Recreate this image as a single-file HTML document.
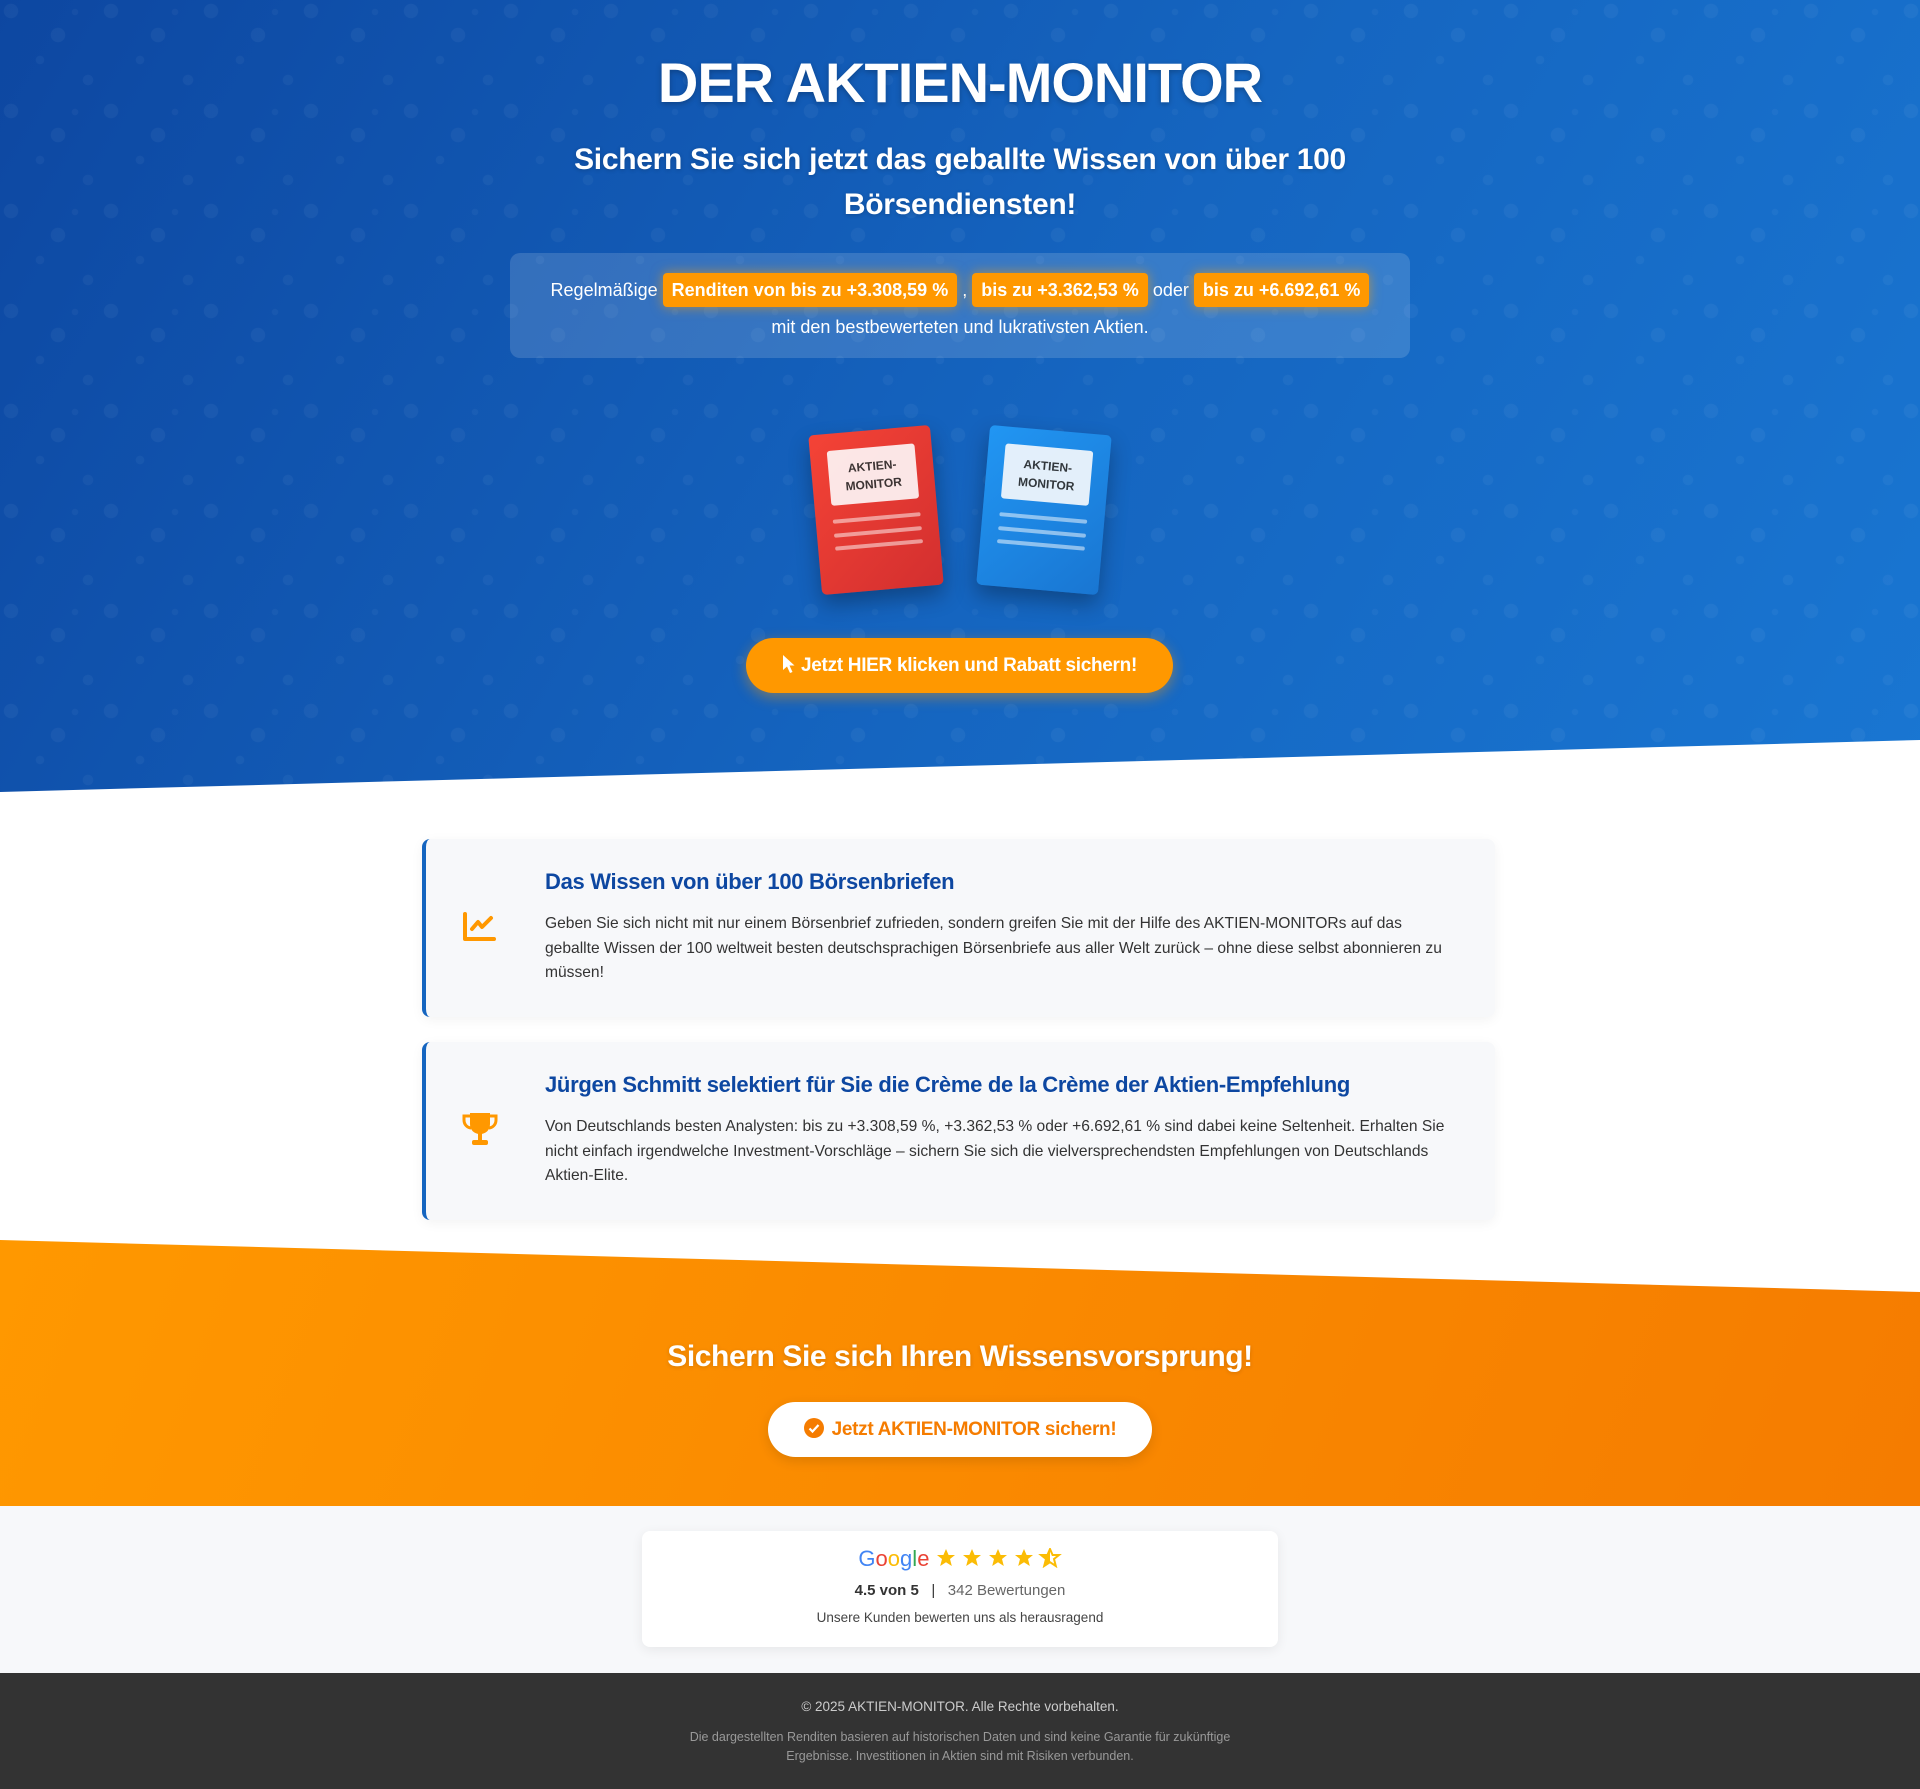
<!DOCTYPE html>
<html><head><meta charset="utf-8"><style>
*{margin:0;padding:0;box-sizing:border-box}
body{width:1920px;height:1789px;font-family:"Liberation Sans",Arial,sans-serif;background:#fff;position:relative;overflow:hidden}
.hero{position:absolute;left:0;top:0;width:1920px;height:792px;
background:
radial-gradient(circle at 11px 11px,rgba(255,255,255,.045) 7px,transparent 7.5px),
radial-gradient(circle at 58px 35px,rgba(255,255,255,.045) 7px,transparent 7.5px),
radial-gradient(circle at 40px 60px,rgba(255,255,255,.04) 4px,transparent 4.5px),
radial-gradient(circle at 88px 80px,rgba(255,255,255,.04) 5px,transparent 5.5px),
radial-gradient(circle at 75px 12px,rgba(255,255,255,.035) 3px,transparent 3.5px),
linear-gradient(120deg,#0d47a1 0%,#1565c0 55%,#1976d2 100%);
background-size:100px 100px,100px 100px,100px 100px,100px 100px,100px 100px,100% 100%;
clip-path:polygon(0 0,100% 0,100% 740px,0 792px)}
.c{position:absolute;left:0;width:1920px;text-align:center;color:#fff}
h1{font-size:56px;font-weight:bold;text-shadow:0 2px 6px rgba(0,0,0,.25);letter-spacing:-1px}
.sub{top:137px;font-size:30px;font-weight:bold;line-height:45px;text-shadow:0 1px 4px rgba(0,0,0,.2);letter-spacing:-.3px}
.box{position:absolute;left:510px;top:253px;width:900px;height:105px;background:rgba(255,255,255,.15);border-radius:10px;color:#fff;font-size:18px;text-align:center;padding-top:19px;line-height:37px}
.hl{background:#ff9800;font-weight:bold;padding:7px 9px;border-radius:4px;box-shadow:0 0 12px rgba(255,160,0,.6)}
.book{position:absolute;width:122px;height:160px;border-radius:5px;box-shadow:0 10px 22px rgba(0,0,0,.3)}
.book .lab{position:absolute;left:17px;top:17px;width:88px;height:55px;background:#fff;border-radius:3px;color:#333;font-size:12px;font-weight:bold;line-height:18px;text-align:center;padding-top:10px;opacity:.95}
.book .ln{position:absolute;left:17px;width:88px;height:4px;border-radius:2px;background:rgba(255,255,255,.5)}
.btn1{position:absolute;left:746px;top:638px;width:427px;height:55px;border-radius:28px;background:#ff9800;color:#fff;font-size:19px;font-weight:bold;text-align:center;line-height:55px;box-shadow:0 4px 14px rgba(255,152,0,.45);letter-spacing:-.3px}
.card{position:absolute;left:422px;width:1073px;background:#f7f8fa;border-left:4px solid #1565c0;border-radius:8px;box-shadow:0 3px 12px rgba(0,0,0,.05)}
.card h3{position:absolute;left:119px;top:30px;color:#0d47a1;font-size:22px;font-weight:bold;letter-spacing:-.3px}
.card p{position:absolute;left:119px;top:73px;width:907px;color:#333;font-size:15.6px;line-height:24.5px}
.card svg{position:absolute;left:36px}
.orange{position:absolute;left:0;top:1240px;width:1920px;height:266px;background:linear-gradient(110deg,#ff9800 0%,#f57c00 100%);clip-path:polygon(0 0,100% 52px,100% 100%,0 100%)}
.btn2{position:absolute;left:768px;top:1402px;width:384px;height:55px;border-radius:28px;background:#fff;color:#f57c00;font-size:19px;font-weight:bold;text-align:center;line-height:55px;box-shadow:0 4px 12px rgba(0,0,0,.12);letter-spacing:-.3px}
.rev{position:absolute;left:0;top:1506px;width:1920px;height:167px;background:#f7f8fa}
.rcard{position:absolute;left:642px;top:25px;width:636px;height:116px;background:#fff;border-radius:8px;box-shadow:0 3px 12px rgba(0,0,0,.07);text-align:center}
footer{position:absolute;left:0;top:1673px;width:1920px;height:116px;background:#333;text-align:center}
</style></head><body>
<div class="hero"></div>
<div class="c" style="top:50px"><h1>DER AKTIEN-MONITOR</h1></div>
<div class="c sub">Sichern Sie sich jetzt das geballte Wissen von über 100<br>Börsendiensten!</div>
<div class="box">Regelmäßige <span class="hl">Renditen von bis zu +3.308,59 %</span> , <span class="hl">bis zu +3.362,53 %</span> oder <span class="hl">bis zu +6.692,61 %</span><br>mit den bestbewerteten und lukrativsten Aktien.</div>
<div class="book" style="left:815px;top:430px;background:linear-gradient(135deg,#f44336,#d32f2f);transform:rotate(-5deg)"><div class="lab" style="background:#fdf0f0">AKTIEN-<br>MONITOR</div><div class="ln" style="top:86px"></div><div class="ln" style="top:100px"></div><div class="ln" style="top:113px"></div></div>
<div class="book" style="left:983px;top:430px;background:linear-gradient(135deg,#2196f3,#1976d2);transform:rotate(5deg)"><div class="lab" style="background:#eef5fc">AKTIEN-<br>MONITOR</div><div class="ln" style="top:86px"></div><div class="ln" style="top:100px"></div><div class="ln" style="top:113px"></div></div>
<div class="btn1"><svg width="13" height="20" viewBox="0 0 13 20" style="vertical-align:-3px;margin-right:6px"><path d="M1 1V16L5 12.5L8 19L10.5 18L7.5 11.5H12.5Z" fill="#fff"/></svg>Jetzt HIER klicken und Rabatt sichern!</div>

<div class="card" style="top:839px;height:178px">
<svg style="top:73px" width="34" height="30" viewBox="0 0 34 30"><path d="M3 2V27H32" fill="none" stroke="#ff9800" stroke-width="4" stroke-linecap="round" stroke-linejoin="round"/><path d="M10 17L16 10L20 15L29 6" fill="none" stroke="#ff9800" stroke-width="4" stroke-linecap="round" stroke-linejoin="round"/></svg>
<h3>Das Wissen von über 100 Börsenbriefen</h3>
<p>Geben Sie sich nicht mit nur einem Börsenbrief zufrieden, sondern greifen Sie mit der Hilfe des AKTIEN-MONITORs auf das geballte Wissen der 100 weltweit besten deutschsprachigen Börsenbriefe aus aller Welt zurück – ohne diese selbst abonnieren zu müssen!</p></div>
<div class="card" style="top:1042px;height:178px">
<svg style="top:70px" width="36" height="34" viewBox="0 0 36 34"><path d="M8 1H28V12C28 18 24 22 18 22C12 22 8 18 8 12Z" fill="#ff9800"/><path d="M8 4H2V8C2 13 6 16 9 16M28 4H34V8C34 13 30 16 27 16" fill="none" stroke="#ff9800" stroke-width="3"/><rect x="16" y="21" width="4" height="7" fill="#ff9800"/><rect x="10" y="28" width="16" height="5" rx="2" fill="#ff9800"/></svg>
<h3>Jürgen Schmitt selektiert für Sie die Crème de la Crème der Aktien-Empfehlung</h3>
<p>Von Deutschlands besten Analysten: bis zu +3.308,59 %, +3.362,53 % oder +6.692,61 % sind dabei keine Seltenheit. Erhalten Sie nicht einfach irgendwelche Investment-Vorschläge – sichern Sie sich die vielversprechendsten Empfehlungen von Deutschlands Aktien-Elite.</p></div>

<div class="orange"></div>
<div class="c" style="top:1340px;font-size:30px;font-weight:bold;text-shadow:0 1px 4px rgba(0,0,0,.15);letter-spacing:-.4px">Sichern Sie sich Ihren Wissensvorsprung!</div>
<div class="btn2"><svg width="20" height="20" viewBox="0 0 20 20" style="vertical-align:-3px;margin-right:8px"><circle cx="10" cy="10" r="10" fill="#f57c00"/><path d="M5.5 10.5L8.5 13.5L14.5 7" fill="none" stroke="#fff" stroke-width="2.2"/></svg>Jetzt AKTIEN-MONITOR sichern!</div>

<div class="rev"><div class="rcard">
<div style="margin-top:13px;font-size:22px;line-height:30px"><span style="color:#4285f4">G</span><span style="color:#ea4335">o</span><span style="color:#fbbc05">o</span><span style="color:#4285f4">g</span><span style="color:#34a853">l</span><span style="color:#ea4335">e</span> <svg width="126" height="20" viewBox="0 0 126 20" style="vertical-align:-2px"><g fill="#fbbc05"><path id="s" d="M10 1L12.6 7H19L14 11L15.8 18L10 14.2L4.2 18L6 11L1 7H7.4Z"/><use href="#s" x="26"/><use href="#s" x="52"/><use href="#s" x="78"/></g><path transform="translate(104 0)" d="M10 1L12.6 7H19L14 11L15.8 18L10 14.2L4.2 18L6 11L1 7H7.4Z" fill="none" stroke="#fbbc05" stroke-width="2"/><path transform="translate(104 0)" d="M10 1V14.2L4.2 18L6 11L1 7H7.4Z" fill="#fbbc05"/></svg></div>
<div style="margin-top:8px;font-size:15px;color:#666"><b style="color:#333">4.5 von 5</b> &nbsp; <span style="color:#333">|</span> &nbsp; 342 Bewertungen</div>
<div style="margin-top:11px;font-size:13.5px;color:#444">Unsere Kunden bewerten uns als herausragend</div>
</div></div>
<footer><div style="padding-top:26px;color:#ccc;font-size:13.5px">© 2025 AKTIEN-MONITOR. Alle Rechte vorbehalten.</div>
<div style="margin-top:14px;color:#999;font-size:12.5px;line-height:19px">Die dargestellten Renditen basieren auf historischen Daten und sind keine Garantie für zukünftige<br>Ergebnisse. Investitionen in Aktien sind mit Risiken verbunden.</div></footer>
</body></html>
